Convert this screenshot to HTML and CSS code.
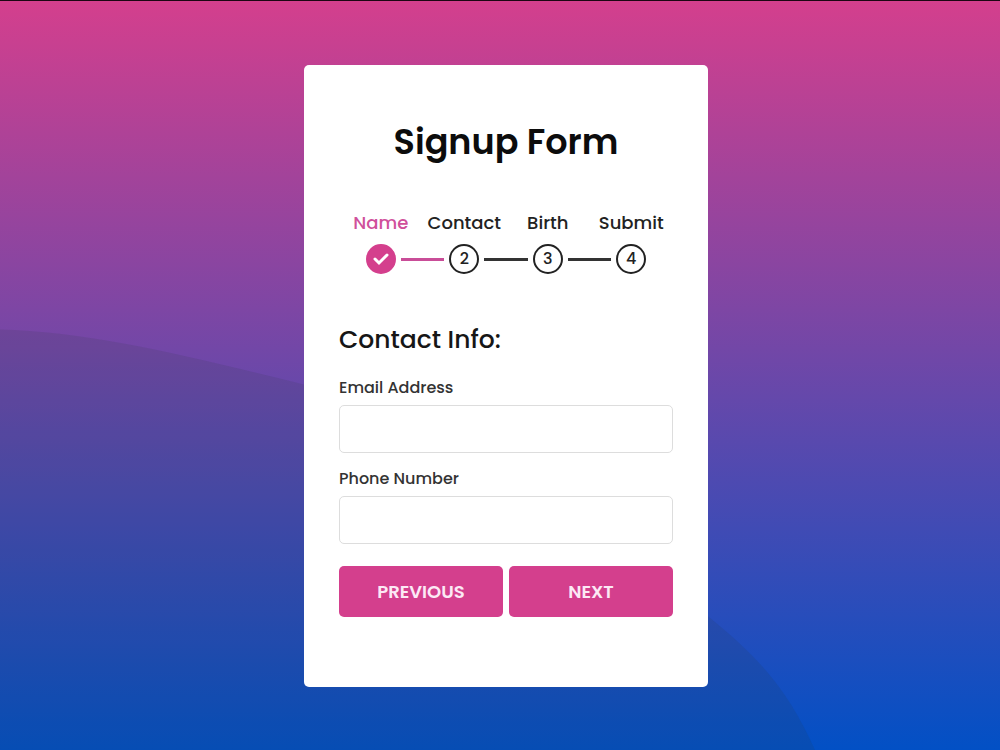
FILE: index.html
```html
<!DOCTYPE html>
<html lang="en">
<head>
    <meta charset="UTF-8">
    <meta name="viewport" content="width=device-width, initial-scale=1.0">
    <title>Signup Form</title>
    <link rel="stylesheet" href="styles.css">
</head>
<body>
    <svg class="wave" viewBox="0 0 1000 750" preserveAspectRatio="none" aria-hidden="true">
        <path d="M0 329 C90 331 190 356 300 383 C470 430 610 540 708 616 C765 662 790 695 815 750 L0 750 Z"/>
    </svg>
    <main class="container">
        <h1>Signup Form</h1>
        <ol class="progress-bar">
            <li class="step active">
                <span class="step-name">Name</span>
                <div class="step-row">
                    <span class="bullet">
                        <svg class="check" viewBox="0 0 16 16" role="img" aria-label="Done">
                            <path d="M2 8 L6 12 L14 4"/>
                        </svg>
                    </span>
                </div>
            </li>
            <li class="step">
                <span class="step-name">Contact</span>
                <div class="step-row"><span class="bullet">2</span></div>
            </li>
            <li class="step">
                <span class="step-name">Birth</span>
                <div class="step-row"><span class="bullet">3</span></div>
            </li>
            <li class="step">
                <span class="step-name">Submit</span>
                <div class="step-row"><span class="bullet">4</span></div>
            </li>
        </ol>
        <form class="page" action="#">
            <h2>Contact Info:</h2>
            <div class="field">
                <label for="email">Email Address</label>
                <input type="text" id="email">
            </div>
            <div class="field">
                <label for="phone">Phone Number</label>
                <input type="text" id="phone">
            </div>
            <div class="btns">
                <button type="button" class="prev">Previous</button>
                <button type="button" class="next">Next</button>
            </div>
        </form>
    </main>
</body>
</html>
```
FILE: styles.css
```css
* {
    margin: 0;
    padding: 0;
    box-sizing: border-box;
}

body {
    font-family: Poppins, Inter, sans-serif;
    min-height: 100vh;
    padding-top: 1px;
    border-top: 1px solid #1c0613;
    display: flex;
    justify-content: center;
    align-items: center;
    position: relative;
    overflow-x: hidden;
    background: linear-gradient(to bottom, #d43f8d, #0250c5);
}

/* dark hill behind the card */
.wave {
    position: absolute;
    top: 0;
    left: 0;
    width: 100%;
    height: 100%;
    fill: rgba(40, 60, 60, 0.12);
}

.container {
    position: relative;
    width: 100%;
    max-width: 404px;
    margin-left: 12px;
    padding: 50px 35px 70px;
    background: #fff;
    border-radius: 5px;
    text-align: center;
}

h1 {
    font-size: 35px;
    font-weight: 600;
    line-height: 54px;
    color: #0c0c0c;
}

.progress-bar {
    display: flex;
    margin: 42px 0 48px;
    list-style: none;
}

.step {
    flex: 1 1 0;
    min-width: 0;
    color: #222;
}

.step-name {
    display: block;
    margin-bottom: 9px;
    font-size: 18px;
    font-weight: 500;
    line-height: 24px;
}

.step-row {
    display: flex;
    align-items: center;
    gap: 5px;
}

/* each half of the line joins the one in the next step */
.step-row::before,
.step-row::after {
    content: "";
    flex: 1;
    height: 3px;
    background: #333;
}

.step:first-child .step-row::before,
.step:last-child .step-row::after {
    background: none;
}

.active .step-row::after,
.active + .step .step-row::before {
    background: #c94d98;
}

.bullet {
    display: flex;
    justify-content: center;
    align-items: center;
    width: 30px;
    height: 30px;
    border: 2px solid #222;
    border-radius: 50%;
    font-size: 16px;
    font-weight: 500;
    line-height: 24px;
}

.active .step-name {
    color: #d0509b;
}

.active .bullet {
    background: #d43f8d;
    border-color: #d43f8d;
}

.check {
    width: 16px;
    height: 16px;
    fill: none;
    stroke: #fff;
    stroke-width: 3;
    stroke-linecap: round;
}

.page {
    text-align: left;
}

h2 {
    margin-bottom: 18px;
    font-size: 25px;
    font-weight: 500;
    line-height: 36px;
    color: #161616;
}

.field {
    margin-bottom: 14px;
}

.field label {
    display: block;
    margin-bottom: 5px;
    font-size: 16px;
    font-weight: 500;
    line-height: 24px;
    color: #333;
}

.field input {
    display: block;
    width: 100%;
    height: 48px;
    padding: 0 15px;
    border: 1px solid #ddd;
    border-radius: 5px;
    font-family: inherit;
    font-size: 18px;
}

.btns {
    display: flex;
    gap: 6px;
    margin-top: 22px;
}

.btns button {
    flex: 1;
    height: 51px;
    background: #d43f8d;
    color: #fce9f5;
    border: none;
    border-radius: 5px;
    cursor: pointer;
    font-family: inherit;
    font-size: 18px;
    font-weight: 600;
    text-transform: uppercase;
}

.btns button:hover {
    background: #b8307a;
}
```
